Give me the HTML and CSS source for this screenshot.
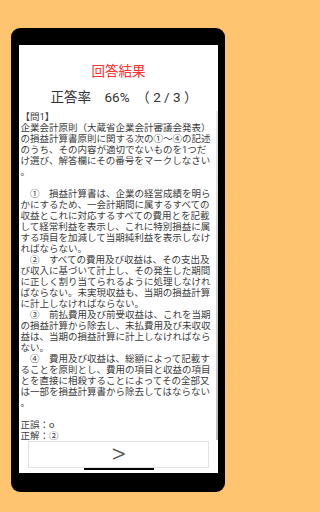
FILE: index.html
```html
<!DOCTYPE html>
<html lang="ja">
<head>
<meta charset="utf-8">
<title>回答結果</title>
<link rel="stylesheet" href="styles.css">
</head>
<body>
<div class="phone">
  <div class="screen">
    <div class="title">回答結果</div>
    <div class="rate">正答率　66%　（ 2 / 3 ）</div>
    <div class="qa">
      <p>【問1】<br>企業会計原則（大蔵省企業会計審議会発表）<br>の損益計算書原則に関する次の①～④の記述<br>のうち、その内容が適切でないものを1つだ<br>け選び、解答欄にその番号をマークしなさい<br>。<br>&nbsp;<br>　①　損益計算書は、企業の経営成績を明ら<br>かにするため、一会計期間に属するすべての<br>収益とこれに対応するすべての費用とを記載<br>して経常利益を表示し、これに特別損益に属<br>する項目を加減して当期純利益を表示しなけ<br>ればならない。<br>　②　すべての費用及び収益は、その支出及<br>び収入に基づいて計上し、その発生した期間<br>に正しく割り当てられるように処理しなけれ<br>ばならない。未実現収益も、当期の損益計算<br>に計上しなければならない。<br>　③　前払費用及び前受収益は、これを当期<br>の損益計算から除去し、未払費用及び未収収<br>益は、当期の損益計算に計上しなければなら<br>ない。<br>　④　費用及び収益は、総額によって記載す<br>ることを原則とし、費用の項目と収益の項目<br>とを直接に相殺することによってその全部又<br>は一部を損益計算書から除去してはならない<br>。<br>&nbsp;<br>正誤：o<br>正解：②</p>
    </div>
    <div class="next">&gt;</div>
    <div class="homebar"></div>
  </div>
</div>
</body>
</html>
```
FILE: styles.css
```css
html, body {
  margin: 0;
  padding: 0;
}
body {
  width: 236px;
  height: 512px;
  overflow: hidden;
  background: #ffc470;
}
.phone {
  box-sizing: border-box;
  margin: 28px 0 0 11px;
  width: 213.5px;
  height: 464px;
  background: #000;
  border-radius: 9px;
  padding: 17px 6.5px 19px 8px;
}
.screen {
  position: relative;
  height: 100%;
  background: #fff;
  display: flex;
  flex-direction: column;
  font-family: Roboto, "Noto Sans CJK JP", sans-serif;
}
.title {
  margin-top: 17.7px;
  text-align: center;
  color: #ff3030;
  font-size: 13.5px;
  line-height: 16px;
}
.rate {
  margin-top: 10px;
  padding-left: 11px;
  text-align: center;
  color: #333;
  font-size: 13.5px;
  line-height: 16px;
  white-space: pre;
}
.qa {
  position: relative;
  margin-top: 6.8px;
  height: 329.5px;
  overflow: hidden;
  padding-left: 1.5px;
  font-size: 9.5px;
  line-height: 11px;
  color: #3c3c3c;
  white-space: nowrap;
}
.qa p {
  margin: 0;
}
.qa::after {
  content: "";
  position: absolute;
  right: 0;
  top: 0;
  bottom: 1px;
  width: 2px;
  background: linear-gradient(#e8e8e8, #bdbdbd);
}
.next {
  box-sizing: border-box;
  margin: 0 9px;
  height: 27px;
  border: 1px solid #e2e2e2;
  display: flex;
  align-items: center;
  justify-content: center;
  font-size: 28px;
  font-weight: 300;
  color: #555;
  line-height: 1;
}
.homebar {
  position: absolute;
  left: 65px;
  top: 422.5px;
  width: 70px;
  height: 2px;
  background: #000;
}
```
